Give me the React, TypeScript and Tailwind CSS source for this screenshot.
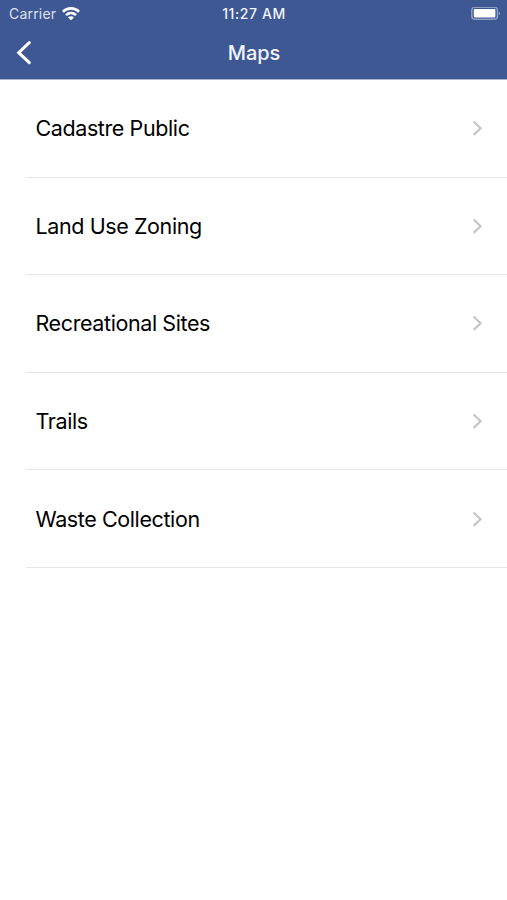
import React from 'react'

const maps = ['Cadastre Public', 'Land Use Zoning', 'Recreational Sites', 'Trails', 'Waste Collection']

const WifiIcon = () => (
  <svg width="18" height="14" viewBox="0 0 18 14" fill="none" stroke="#fff" strokeWidth="2.6">
    <path d="M.9 4.7C5.5 .3 12.5 .3 17.1 4.7" />
    <path d="M4 8.1C6.9 5.4 11.1 5.4 14 8.1" />
    <path d="M9 13.3L6 10.4C7.7 8.9 10.3 8.9 12 10.4Z" fill="#fff" stroke="none" />
  </svg>
)

const BatteryIcon = () => (
  <svg width="30" height="14" viewBox="0 0 30 14" fill="none">
    <rect x=".8" y=".3" width="25.6" height="12" rx="3" stroke="#8c9cc2" strokeWidth="1.5" />
    <rect x="2.8" y="2" width="21.6" height="8.6" rx="1" fill="#fff" />
    <path d="M27.8 4.4C29.6 5.2 29.6 7.4 27.8 8.2Z" fill="#8c9cc2" />
  </svg>
)

const StatusBar = () => (
  <div className="grid h-[27px] grid-cols-3 items-center text-white">
    <div className="flex items-center gap-1.5 pl-[9px] text-[14px] tracking-[0.2px] text-[#dce2f0]">
      <span>Carrier</span>
      <WifiIcon />
    </div>
    <span className="pb-px pl-px text-center text-[14px] font-medium tracking-[0.6px] text-[#f1f4fa]">11:27 AM</span>
    <div className="flex justify-end pr-[6px]">
      <BatteryIcon />
    </div>
  </div>
)

export default function App() {
  return (
    <div className="min-h-screen w-full bg-white font-['Inter',sans-serif] text-black">
      <header className="h-[80px] border-b border-[#a9b5d0] bg-[#3e5893]">
        <StatusBar />
        <div className="grid h-[51px] grid-cols-3 items-center">
          <svg className="ml-4" width="16" height="26" viewBox="0 0 16 26" fill="none" stroke="#fff" strokeWidth="3">
            <path d="M13.3 2.7L2.7 12.7L13.3 22.7" strokeLinecap="round" />
          </svg>
          <h1 className="pl-px text-center text-[20px] font-medium text-[#f1f4fa]">Maps</h1>
        </div>
      </header>
      <ul className="pl-[26px]">
        {maps.map((name) => (
          <li key={name} className="flex h-[97.6px] items-center justify-between border-b border-[#e6e6e6] pr-6 pl-[9.5px]">
            <span className="text-[21.5px] tracking-[-0.4px]">{name}</span>
            <svg width="11" height="16" viewBox="0 0 11 16" fill="none" stroke="#c6c6c8" strokeWidth="2.2">
              <path d="M1.6 1.5L8.6 8.2L1.6 14.9" />
            </svg>
          </li>
        ))}
      </ul>
    </div>
  )
}
